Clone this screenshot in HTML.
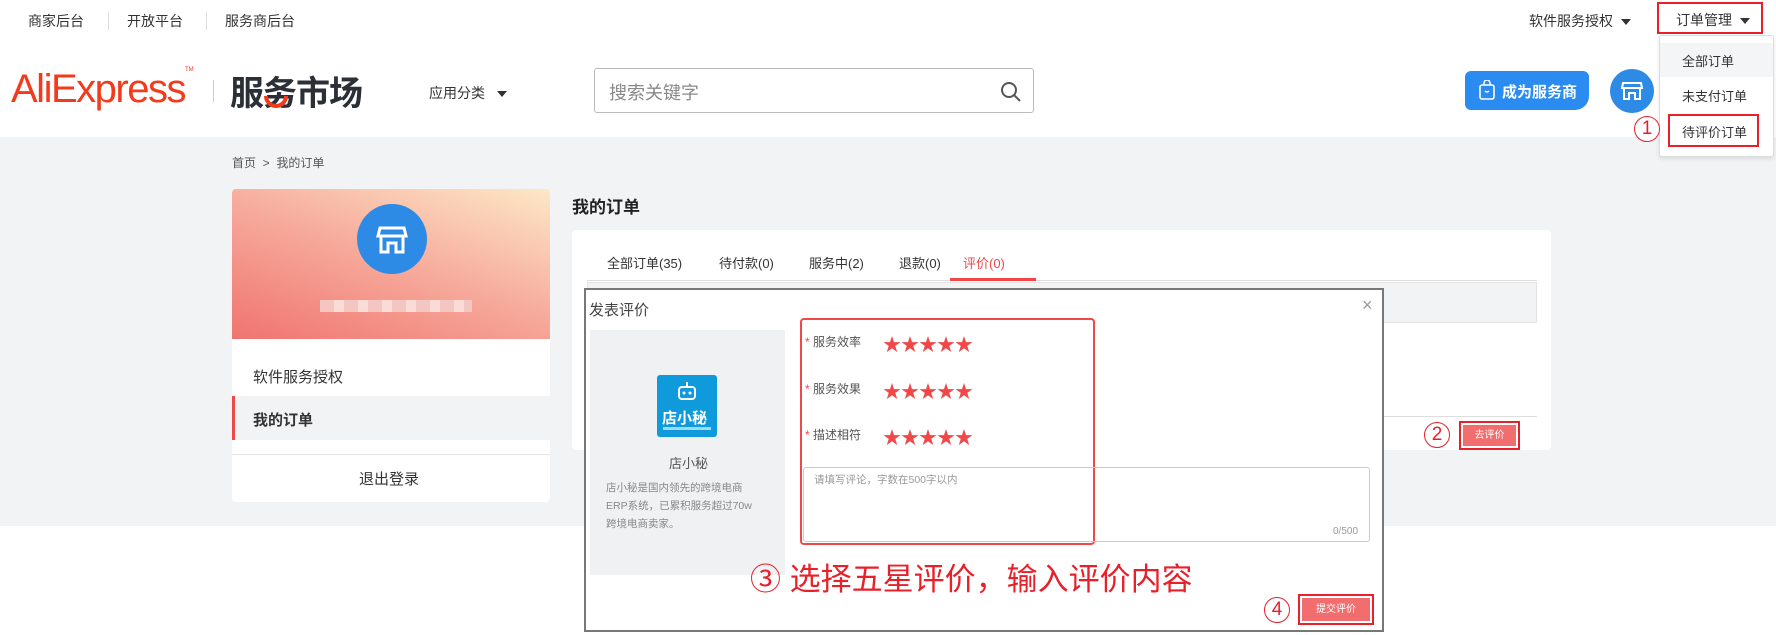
<!DOCTYPE html>
<html><head><meta charset="utf-8"><style>
*{margin:0;padding:0;box-sizing:border-box}
body{width:1776px;height:635px;overflow:hidden;background:#fff;font-family:"Liberation Sans","Noto Sans CJK SC",sans-serif;color:#333;position:relative}
.a{position:absolute;white-space:nowrap}
.tri{display:inline-block;width:0;height:0;border-left:5px solid transparent;border-right:5px solid transparent;border-top:6px solid #333;vertical-align:middle;margin-left:8px}
.star{color:#f04848;font-size:18px;letter-spacing:0px}
.z{z-index:5}
</style></head><body>
<!-- top bar -->
<div class="a" style="left:28px;top:11px;font-size:14px">商家后台</div>
<div class="a" style="left:108px;top:12px;width:1px;height:18px;background:#ddd"></div>
<div class="a" style="left:127px;top:11px;font-size:14px">开放平台</div>
<div class="a" style="left:206px;top:12px;width:1px;height:18px;background:#ddd"></div>
<div class="a" style="left:225px;top:11px;font-size:14px">服务商后台</div>
<div class="a" style="left:1529px;top:11px;font-size:14px">软件服务授权<span class="tri"></span></div>
<div class="a" style="left:1657px;top:2px;width:106px;height:32px;border:2px solid #e8202a"></div>
<div class="a" style="left:1676px;top:10px;font-size:14px">订单管理<span class="tri"></span></div>
<!-- header -->
<div class="a" style="left:11px;top:67px;font-size:40px;color:#f33b1c;letter-spacing:-1.5px;font-family:'Liberation Sans',sans-serif">AliExpress<span style="font-size:6px;vertical-align:top;letter-spacing:0">TM</span></div>
<div class="a" style="left:213px;top:80px;width:1px;height:22px;background:#ccc"></div>
<div class="a" style="left:230px;top:66px;font-size:34px;font-weight:bold;color:#2b2f36;letter-spacing:-1px">服务市场</div>
<div class="a" style="left:264px;top:96px;width:24px;height:12px;border:4px solid #f33b1c;border-top:none;border-radius:0 0 14px 14px"></div>
<div class="a" style="left:429px;top:83px;font-size:14px">应用分类<span class="tri" style="margin-left:12px"></span></div>
<div class="a" style="left:594px;top:68px;width:440px;height:45px;border:1px solid #bbb;border-radius:3px"></div>
<div class="a" style="left:609px;top:79px;font-size:18px;color:#888">搜索关键字</div>
<svg class="a" style="left:1000px;top:81px" width="22" height="22" viewBox="0 0 22 22"><circle cx="9" cy="9" r="7" fill="none" stroke="#555" stroke-width="2"/><path d="M14 14l6 6" stroke="#555" stroke-width="2"/></svg>
<div class="a" style="left:1465px;top:71px;width:124px;height:39px;background:#2a8cf0;border-radius:6px 6px 14px 6px;color:#fff;font-size:15px;font-weight:bold;padding:10px 0 0 37px">成为服务商</div>
<svg class="a" style="left:1478px;top:80px" width="18" height="20"><rect x="2" y="5" width="14" height="14" rx="2" fill="none" stroke="#fff" stroke-width="1.6"/><path d="M6 5V3a3 3 0 0 1 6 0v2M7 11q2 2 4 0" fill="none" stroke="#fff" stroke-width="1.5"/></svg>
<div class="a" style="left:1610px;top:69px;width:44px;height:44px;border-radius:50%;background:#2d8be6"></div>
<svg class="a" style="left:1620px;top:79px" width="24" height="24"><path d="M3 4h18l1 5H2zM4 9v11h5v-6h6v6h5V9" fill="none" stroke="#fff" stroke-width="2"/></svg>
<!-- gray band -->
<div class="a" style="left:0;top:137px;width:1776px;height:389px;background:#f2f3f5"></div>
<!-- dropdown -->
<div class="a z" style="left:1659px;top:35px;width:115px;height:122px;background:#fff;border:1px solid #ddd;border-radius:3px;box-shadow:0 2px 4px rgba(0,0,0,.1)"></div>
<div class="a z" style="left:1660px;top:43px;width:113px;height:34px;background:#f4f5f7"></div>
<div class="a z" style="left:1682px;top:51px;font-size:13px">全部订单</div>
<div class="a z" style="left:1682px;top:86px;font-size:13px">未支付订单</div>
<div class="a z" style="left:1668px;top:114px;width:91px;height:33px;border:2px solid #e8202a"></div>
<div class="a z" style="left:1682px;top:122px;font-size:13px">待评价订单</div>
<div class="a z" style="left:1634px;top:116px;width:26px;height:26px;border:1.5px solid #e8202a;border-radius:50%;color:#e8202a;font-size:19px;text-align:center;line-height:24px;background:#fff">1</div>
<div class="a" style="left:232px;top:154px;font-size:12px;color:#555">首页 &nbsp;&gt;&nbsp; 我的订单</div>
<!-- left card -->
<div class="a" style="left:232px;top:189px;width:318px;height:313px;background:#fff;border-radius:4px;overflow:hidden">
 <div style="height:150px;background:linear-gradient(20deg,#f07470 0%,#f6a99a 50%,#fde8c6 100%)"></div>
</div>
<div class="a" style="left:357px;top:204px;width:70px;height:70px;border-radius:50%;background:#2d8be6"></div>
<svg class="a" style="left:375px;top:222px" width="34" height="34"><path d="M5 6h24l2 8H3zM6 14v16h7v-9h8v9h7V14" fill="none" stroke="#fff" stroke-width="3"/></svg>
<div class="a" style="left:320px;top:300px;width:152px;height:12px;background:repeating-linear-gradient(90deg,#f4c6c2 0 14px,#f9dcd6 14px 24px)"></div>
<div class="a" style="left:253px;top:366px;font-size:15px">软件服务授权</div>
<div class="a" style="left:232px;top:396px;width:318px;height:44px;background:#f2f3f5;border-left:3px solid #f04848"></div>
<div class="a" style="left:253px;top:409px;font-size:15px;font-weight:bold">我的订单</div>
<div class="a" style="left:232px;top:454px;width:318px;height:1px;background:#e6e6e6"></div>
<div class="a" style="left:359px;top:468px;font-size:15px">退出登录</div>
<!-- right -->
<div class="a" style="left:572px;top:193px;font-size:17px;font-weight:bold;color:#222">我的订单</div>
<div class="a" style="left:572px;top:230px;width:979px;height:220px;background:#fff;border-radius:4px"></div>
<div class="a" style="left:607px;top:253px;font-size:13px;color:#333">全部订单(35)</div>
<div class="a" style="left:719px;top:253px;font-size:13px">待付款(0)</div>
<div class="a" style="left:809px;top:253px;font-size:13px">服务中(2)</div>
<div class="a" style="left:899px;top:253px;font-size:13px">退款(0)</div>
<div class="a" style="left:963px;top:253px;font-size:13px;color:#f04848">评价(0)</div>
<div class="a" style="left:587px;top:280px;width:950px;height:1px;background:#ddd"></div>
<div class="a" style="left:950px;top:278px;width:86px;height:3px;background:#f04848"></div>
<div class="a" style="left:587px;top:282px;width:950px;height:41px;background:#f2f3f5;border:1px solid #e3e3e3"></div>
<div class="a" style="left:587px;top:416px;width:950px;height:1px;background:#ddd"></div>
<div class="a" style="left:1459px;top:421px;width:61px;height:29px;border:2px solid #e8202a;padding:2px"><div style="background:#f26d6d;height:100%;color:#fff;font-size:10px;text-align:center;line-height:21px">去评价</div></div>
<div class="a" style="left:1424px;top:422px;width:26px;height:26px;border:1.5px solid #e8202a;border-radius:50%;color:#e8202a;font-size:19px;text-align:center;line-height:24px">2</div>
<!-- dialog -->
<div class="a" style="left:584px;top:288px;width:800px;height:344px;background:#fff;border:2px solid #777"></div>
<div class="a" style="left:589px;top:299px;font-size:15px;color:#444">发表评价</div>
<div class="a" style="left:1362px;top:295px;font-size:18px;color:#999">×</div>
<div class="a" style="left:590px;top:330px;width:195px;height:245px;background:#f0f1f3"></div>
<div class="a" style="left:657px;top:375px;width:60px;height:62px;background:#0e9adb;border-radius:3px"></div>
<svg class="a" style="left:675px;top:381px" width="24" height="22"><path d="M12 1v4" stroke="#fff" stroke-width="2"/><rect x="4" y="6" width="16" height="12" rx="3" fill="none" stroke="#fff" stroke-width="2"/><circle cx="9" cy="12" r="1.5" fill="#fff"/><circle cx="15" cy="12" r="1.5" fill="#fff"/></svg>
<div class="a" style="left:662px;top:407px;font-size:15px;color:#fff;font-weight:bold">店小秘</div>
<div class="a" style="left:663px;top:427px;width:48px;height:3px;background:#9fdaf3"></div>
<div class="a" style="left:669px;top:453px;font-size:13px;color:#555">店小秘</div>
<div class="a" style="left:606px;top:479px;font-size:10.5px;color:#888;line-height:18px;white-space:normal;width:170px">店小秘是国内领先的跨境电商<br>ERP系统，已累积服务超过70w<br>跨境电商卖家。</div>
<div class="a" style="left:800px;top:318px;width:295px;height:227px;border:2px solid #f04848;border-radius:4px"></div>
<div class="a" style="left:805px;top:333px;font-size:12px;color:#555"><span style="color:#f04848">*</span> 服务效率</div>
<div class="a" style="left:883px;top:331px"><span class="star">★★★★★</span></div>
<div class="a" style="left:805px;top:380px;font-size:12px;color:#555"><span style="color:#f04848">*</span> 服务效果</div>
<div class="a" style="left:883px;top:378px"><span class="star">★★★★★</span></div>
<div class="a" style="left:805px;top:426px;font-size:12px;color:#555"><span style="color:#f04848">*</span> 描述相符</div>
<div class="a" style="left:883px;top:424px"><span class="star">★★★★★</span></div>
<div class="a" style="left:803px;top:467px;width:567px;height:75px;border:1px solid #ccc;border-radius:3px"></div>
<div class="a" style="left:814px;top:472px;font-size:10.5px;color:#999">请填写评论，字数在500字以内</div>
<div class="a" style="left:1333px;top:526px;font-size:10px;color:#999">0/500</div>
<div class="a" style="left:750px;top:554px;font-size:31px;color:#e8202a">③ 选择五星评价，输入评价内容</div>
<div class="a" style="left:1264px;top:597px;width:26px;height:26px;border:1.5px solid #e8202a;border-radius:50%;color:#e8202a;font-size:19px;text-align:center;line-height:24px">4</div>
<div class="a" style="left:1298px;top:594px;width:76px;height:31px;border:2px solid #e8202a;padding:2px"><div style="background:#f26d6d;height:100%;color:#fff;font-size:10px;text-align:center;line-height:23px">提交评价</div></div>
</body></html>
